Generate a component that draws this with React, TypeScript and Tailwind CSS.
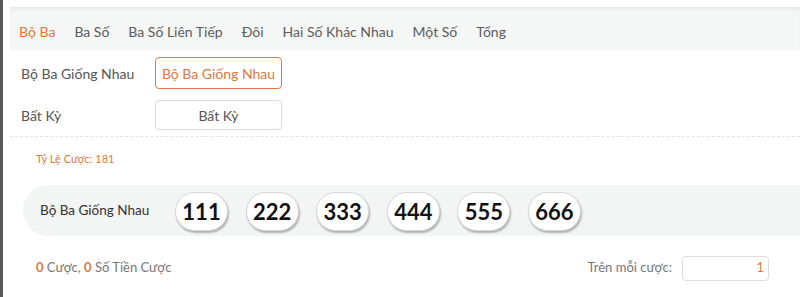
const tabs = ['Bộ Ba', 'Ba Số', 'Ba Số Liên Tiếp', 'Đôi', 'Hai Số Khác Nhau', 'Một Số', 'Tổng'];
const balls = ['111', '222', '333', '444', '555', '666'];

function Ball({ value }: { value: string }) {
  return (
    <div className="w-[53px] h-[39px] rounded-full bg-white border border-[#d6d6d6] shadow-[1px_2px_2px_rgba(0,0,0,0.28)] flex items-center justify-center text-[22px] font-bold text-[#111]">
      {value}
    </div>
  );
}

export default function App() {
  return (
    <div className="w-[800px] h-[297px] bg-white flex overflow-hidden font-['Lato','Open_Sans',sans-serif] text-[#555]">
      <div className="w-[3px] bg-[#5a5a5a]" />
      <div className="w-[7px] bg-white" />
      <div className="flex-1 flex flex-col">
        {/* top strip + tab bar */}
        <div className="h-[7px] bg-white" />
        <div className="h-[43px] bg-[#f5f6f6] shadow-[inset_0_4px_4px_-2px_rgba(0,0,0,0.07)] flex items-center gap-[19px] pl-[9px] pt-[5px] text-[14px]">
          {tabs.map((t, i) => (
            <span key={t} className={i === 0 ? 'text-[#e0783e]' : 'text-[#5c5c5c]'}>
              {t}
            </span>
          ))}
        </div>

        {/* options */}
        <div className="flex flex-col gap-[11px] pt-[7px] pl-[11px] text-[14px]">
          <div className="flex items-center">
            <span className="w-[134px] text-[#555]">Bộ Ba Giống Nhau</span>
            <button className="w-[127px] h-[32px] rounded-[4px] border border-[#e0783e] text-[#e0783e] bg-white">
              Bộ Ba Giống Nhau
            </button>
          </div>
          <div className="flex items-center">
            <span className="w-[134px] text-[#555]">Bất Kỳ</span>
            <button className="w-[127px] h-[30px] rounded-[4px] border border-[#dcdcdc] text-[#555] bg-white">
              Bất Kỳ
            </button>
          </div>
        </div>

        <div className="mt-[6px] border-t border-dashed border-[#e4e4e4]" />

        <div className="pl-[26px] pt-[14px] text-[11px] text-[#e0783e]">Tỷ Lệ Cược: 181</div>

        {/* ball row */}
        <div className="mt-[17px] ml-[13px] -mr-[40px] h-[51px] rounded-l-full bg-[#f3f4f4] flex items-center">
          <span className="pl-[17px] w-[152px] text-[13.5px] text-[#333]">Bộ Ba Giống Nhau</span>
          <div className="flex gap-[17.6px] pt-[3px]">
            {balls.map((b) => (
              <Ball key={b} value={b} />
            ))}
          </div>
        </div>

        {/* footer */}
        <div className="flex items-center justify-between pl-[26px] pr-[31px] mt-[20px] text-[13px] text-[#777]">
          <span>
            <b className="text-[#e0783e]">0</b> Cược, <b className="text-[#e0783e]">0</b> Số Tiền Cược
          </span>
          <div className="flex items-center gap-[10px]">
            <span>Trên mỗi cược:</span>
            <div className="w-[87px] h-[25px] rounded-[4px] border border-[#dcdcdc] flex items-center justify-end pr-[4px] text-[13px] text-[#e0783e]">
              1
            </div>
          </div>
        </div>
      </div>
    </div>
  );
}
